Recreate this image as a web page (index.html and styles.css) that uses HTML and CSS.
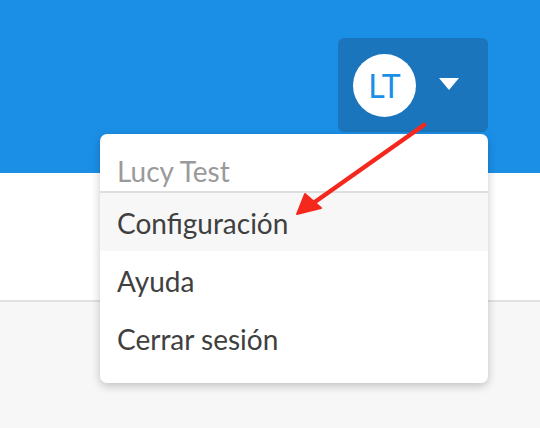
FILE: index.html
```html
<!DOCTYPE html>
<html lang="es">
<head>
<meta charset="utf-8">
<link rel="stylesheet" href="styles.css">
</head>
<body>
<header class="topbar">
  <button class="user-btn" type="button">
    <span class="avatar">LT</span>
    <svg class="caret" width="20" height="12" viewBox="0 0 20 12"><path d="M0 0H20L10 12Z" fill="#fff"/></svg>
  </button>
</header>
<main class="content"></main>
<section class="footer-area"></section>

<div class="menu">
  <div class="menu-head">Lucy Test</div>
  <div class="menu-item active">Configuración</div>
  <div class="menu-item">Ayuda</div>
  <div class="menu-item">Cerrar sesión</div>
</div>

<svg class="annotation" width="540" height="428" viewBox="0 0 540 428">
  <line x1="424" y1="125" x2="312" y2="204" stroke="#f5281e" stroke-width="4.5" stroke-linecap="round"/>
  <path d="M297 214 L305 194 L321 208 Z" fill="#f5281e" stroke="#f5281e" stroke-width="2" stroke-linejoin="round"/>
</svg>
</body>
</html>
```
FILE: styles.css
```css
* { box-sizing: border-box; }
html, body { margin: 0; padding: 0; }
body {
  width: 540px;
  height: 428px;
  overflow: hidden;
  position: relative;
  font-family: Lato, "Open Sans", sans-serif;
  background: #f7f7f7;
}
.topbar {
  height: 173px;
  background: #1b8fe6;
  display: flex;
  justify-content: flex-end;
  align-items: flex-start;
  padding: 38px 52px 0 0;
}
.user-btn {
  width: 150px;
  height: 94px;
  border: 0;
  border-radius: 6px;
  background: #1a75bc;
  display: flex;
  align-items: center;
  padding: 0 0 0 15px;
  gap: 23px;
  cursor: pointer;
}
.avatar {
  width: 63px;
  height: 63px;
  border-radius: 50%;
  background: #fff;
  color: #1b8fe6;
  font-family: Lato, sans-serif;
  font-size: 32px;
  display: flex;
  align-items: center;
  justify-content: center;
}
.caret { display: block; margin-top: -2px; }
.content {
  height: 129px;
  background: #fff;
  border-bottom: 2px solid #e2e2e2;
}
.menu {
  position: absolute;
  top: 134px;
  left: 100px;
  width: 388px;
  background: #fff;
  border-radius: 7px;
  box-shadow: 0 3px 10px rgba(0,0,0,0.22);
  padding-bottom: 16px;
}
.menu-head {
  height: 59px;
  padding: 16px 0 0 17px;
  line-height: 43px;
  font-size: 28px;
  color: #9a9a9a;
  border-bottom: 2px solid #dedede;
}
.menu-item {
  height: 58px;
  line-height: 60px;
  padding-left: 17px;
  font-size: 28px;
  color: #404040;
}
.menu-item.active { background: #f7f7f7; }
.annotation {
  position: absolute;
  top: 0;
  left: 0;
  pointer-events: none;
}
```
